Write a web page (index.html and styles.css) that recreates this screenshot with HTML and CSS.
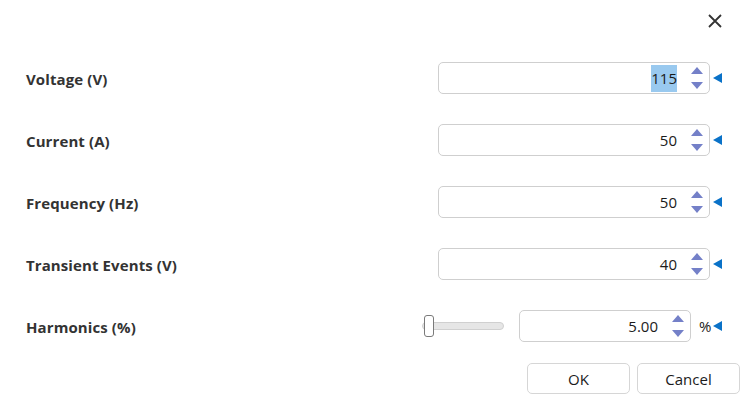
FILE: index.html
```html
<!DOCTYPE html>
<html lang="en">
<head>
    <meta charset="UTF-8">
    <title>Power Settings</title>
    <link rel="stylesheet" href="styles.css">
</head>
<body>
    <div class="dialog">
        <div class="header">
            <button class="close" title="Close">
                <svg width="14" height="14" viewBox="0 0 14 14"><path d="M1 1 L13 13 M13 1 L1 13" stroke="#333" stroke-width="1.8" fill="none"/></svg>
            </button>
        </div>

        <div class="row">
            <label>Voltage (V)</label>
            <div class="controls">
                <div class="spin wide"><span class="value"><span class="sel">115</span></span><span class="arrows"><i class="up"></i><i class="down"></i></span></div>
                <span class="marker"></span>
            </div>
        </div>
        <div class="row">
            <label>Current (A)</label>
            <div class="controls">
                <div class="spin wide"><span class="value">50</span><span class="arrows"><i class="up"></i><i class="down"></i></span></div>
                <span class="marker"></span>
            </div>
        </div>
        <div class="row">
            <label>Frequency (Hz)</label>
            <div class="controls">
                <div class="spin wide"><span class="value">50</span><span class="arrows"><i class="up"></i><i class="down"></i></span></div>
                <span class="marker"></span>
            </div>
        </div>
        <div class="row">
            <label>Transient Events (V)</label>
            <div class="controls">
                <div class="spin wide"><span class="value">40</span><span class="arrows"><i class="up"></i><i class="down"></i></span></div>
                <span class="marker"></span>
            </div>
        </div>
        <div class="row">
            <label>Harmonics (%)</label>
            <div class="controls">
                <div class="slider"><div class="track"></div><div class="thumb"></div></div>
                <div class="spin narrow"><span class="value">5.00</span><span class="arrows"><i class="up"></i><i class="down"></i></span></div>
                <span class="unit">%</span>
                <span class="marker tight"></span>
            </div>
        </div>

        <div class="buttons">
            <button class="btn">OK</button>
            <button class="btn">Cancel</button>
        </div>
    </div>
</body>
</html>
```

FILE: styles.css
```css
html, body {
    margin: 0;
    background: #ffffff;
}
body {
    font-family: "Open Sans", "Noto Sans", sans-serif;
    color: #1b1b1b;
}
.dialog {
    width: 750px;
    height: 403px;
    padding: 0 28px 0 26px;
    box-sizing: border-box;
}
.header {
    height: 47px;
    display: flex;
    justify-content: flex-end;
    margin-right: -8px;
}
.close {
    border: none;
    background: none;
    padding: 0;
    width: 30px;
    height: 30px;
    margin-top: 6px;
    display: flex;
    align-items: center;
    justify-content: center;
}
.row {
    height: 62px;
    display: flex;
    align-items: center;
    justify-content: space-between;
}
label {
    font-weight: bold;
    font-size: 15px;
    color: #333333;
    letter-spacing: 0.1px;
    padding-top: 2px;
}
.controls {
    display: flex;
    align-items: center;
}
.spin {
    height: 32px;
    box-sizing: border-box;
    border: 1px solid #cfcfcf;
    border-radius: 5px;
    display: flex;
    align-items: center;
    justify-content: flex-end;
    padding-right: 4px;
    font-size: 15px;
}
.spin.wide {
    width: 272px;
}
.spin.narrow {
    width: 172px;
}
.value {
    margin-right: 13px;
}
.sel {
    background: #99c9ef;
    padding: 3px 0 4px;
}
.arrows {
    width: 14px;
    height: 22px;
    display: flex;
    flex-direction: column;
    justify-content: space-between;
    align-items: center;
    margin-right: 1px;
}
.arrows i {
    width: 0;
    height: 0;
    border-left: 6px solid transparent;
    border-right: 6px solid transparent;
}
.arrows .up {
    border-bottom: 7px solid #7480c8;
}
.arrows .down {
    border-top: 7px solid #7480c8;
}
.marker {
    width: 0;
    height: 0;
    margin-left: 3px;
    border-top: 5px solid transparent;
    border-bottom: 5px solid transparent;
    border-right: 9px solid #0a72c8;
}
.marker.tight {
    margin-left: 0;
}
.unit {
    font-size: 15px;
    width: 14px;
    margin-left: 8px;
}
.slider {
    position: relative;
    width: 82px;
    height: 22px;
    margin-right: 15px;
    display: flex;
    align-items: center;
}
.track {
    width: 100%;
    height: 8px;
    box-sizing: border-box;
    background: #e6e6e6;
    border: 1px solid #d0d0d0;
    border-radius: 4px;
}
.thumb {
    position: absolute;
    left: 2px;
    top: 0;
    width: 10px;
    height: 22px;
    box-sizing: border-box;
    background: #ffffff;
    border: 1px solid #7a7a7a;
    border-radius: 3px;
}
.buttons {
    display: flex;
    justify-content: flex-end;
    gap: 7px;
    margin-top: 6px;
    margin-right: -18px;
}
.btn {
    width: 103px;
    height: 31px;
    background: #ffffff;
    border: 1px solid #d6d6d6;
    border-radius: 5px;
    font-family: "Open Sans", "Noto Sans", sans-serif;
    font-size: 15px;
    color: #1b1b1b;
}
```
